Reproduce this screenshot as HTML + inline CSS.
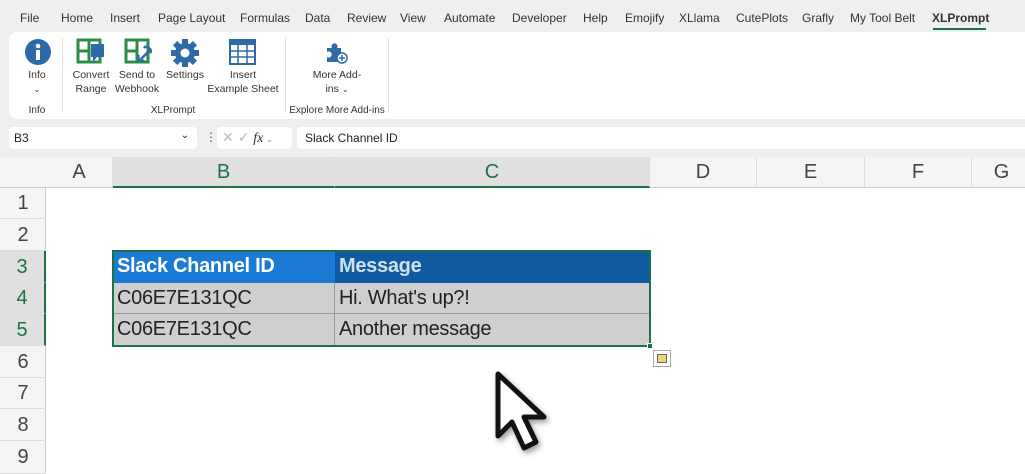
<!DOCTYPE html><html><head><style>
*{margin:0;padding:0;box-sizing:border-box}
body{width:1025px;height:474px;overflow:hidden;background:#eeeff1;font-family:"Liberation Sans",sans-serif;position:relative;color:#222}
.a{position:absolute}
.tab{position:absolute;top:11px;font-size:12px;color:#333}
.lbl{position:absolute;font-size:10.5px;text-align:center;line-height:14px;color:#333;white-space:nowrap}
.ch{position:absolute;top:157px;height:30px;font-size:20px;color:#444;text-align:center;line-height:30px;border-right:1px solid #ddd}
.rh{position:absolute;left:0;width:46px;font-size:20px;color:#444;text-align:center;border-bottom:1px solid #ddd}
.cell{position:absolute;font-size:20px;line-height:31px;padding-left:4px;letter-spacing:-0.3px}
</style></head><body>
<div class="tab" style="left:20px">File</div>
<div class="tab" style="left:61px">Home</div>
<div class="tab" style="left:110px">Insert</div>
<div class="tab" style="left:158px">Page Layout</div>
<div class="tab" style="left:240px">Formulas</div>
<div class="tab" style="left:305px">Data</div>
<div class="tab" style="left:347px">Review</div>
<div class="tab" style="left:400px">View</div>
<div class="tab" style="left:444px">Automate</div>
<div class="tab" style="left:512px">Developer</div>
<div class="tab" style="left:583px">Help</div>
<div class="tab" style="left:625px">Emojify</div>
<div class="tab" style="left:679px">XLlama</div>
<div class="tab" style="left:736px">CutePlots</div>
<div class="tab" style="left:802px">Grafly</div>
<div class="tab" style="left:850px">My Tool Belt</div>
<div class="tab" style="left:932px;font-weight:bold">XLPrompt</div>
<div class="a" style="left:933px;top:28px;width:53px;height:2px;background:#1e7145"></div>

<div class="a" style="left:9px;top:32px;width:1016px;height:87px;background:#fff;border-radius:8px 0 0 8px"></div>
<div class="a" style="left:62px;top:38px;width:1px;height:74px;background:#e0e0e0"></div>
<div class="a" style="left:285px;top:38px;width:1px;height:74px;background:#e0e0e0"></div>
<div class="a" style="left:388px;top:38px;width:1px;height:74px;background:#e0e0e0"></div>
<svg class="a" style="left:24px;top:38px" width="28" height="28"><circle cx="14" cy="14" r="13" fill="#2e6aa8"/><rect x="12" y="12" width="4" height="10" fill="#fff"/><circle cx="14" cy="8" r="2.3" fill="#fff"/></svg>
<svg class="a" style="left:76px;top:38px" width="30" height="28"><rect x="2" y="2" width="22" height="22" fill="none" stroke="#2e8b4a" stroke-width="3"/><path d="M13 2v22M2 13h11" stroke="#2e8b4a" stroke-width="3"/><rect x="15" y="6" width="13" height="13" fill="#2e6aa8"/><path d="M17 19v5l4-5z" fill="#2e6aa8"/></svg>
<svg class="a" style="left:124px;top:38px" width="30" height="28"><rect x="2" y="2" width="22" height="22" fill="none" stroke="#2e8b4a" stroke-width="3"/><path d="M13 2v22M2 13h11" stroke="#2e8b4a" stroke-width="3"/><path d="M17 21l9-9M20 10a3 3 0 0 1 5 0l1 1a3 3 0 0 1 0 4M15 17a3 3 0 0 0 0 4l1 1a3 3 0 0 0 4 0" stroke="#2e6aa8" stroke-width="2.5" fill="none"/></svg>
<svg class="a" style="left:170px;top:38px" width="30" height="30" viewBox="0 0 30 30"><g fill="#2e6aa8" transform="translate(15 15)"><circle r="10"/><rect x="-3" y="-14" width="6" height="28"/><rect x="-3" y="-14" width="6" height="28" transform="rotate(45)"/><rect x="-3" y="-14" width="6" height="28" transform="rotate(90)"/><rect x="-3" y="-14" width="6" height="28" transform="rotate(135)"/></g><circle cx="15" cy="15" r="4.5" fill="#fff"/></svg>
<svg class="a" style="left:229px;top:39px" width="27" height="26"><rect x="1" y="1" width="25" height="24" fill="#fff" stroke="#2e6aa8" stroke-width="2"/><rect x="1" y="1" width="25" height="5" fill="#2e6aa8"/><path d="M1 12h25M1 18h25M9 6v19M18 6v19" stroke="#2e6aa8" stroke-width="1.5"/></svg>
<svg class="a" style="left:324px;top:40px" width="24" height="24"><path d="M3 8h5a3 3 0 1 1 5 0h4v5a3 3 0 1 1 0 5v4H3v-5a3 3 0 1 0 0-5z" fill="#2e6aa8"/><circle cx="18" cy="18" r="5" fill="#fff" stroke="#2e6aa8" stroke-width="1.5"/><path d="M18 15v6M15 18h6" stroke="#2e6aa8" stroke-width="1.5"/></svg>
<div class="lbl" style="left:17px;top:68px;width:40px">Info<br><span style="font-size:8px">⌄</span></div>
<div class="lbl" style="left:68px;top:68px;width:46px">Convert<br>Range</div>
<div class="lbl" style="left:112px;top:68px;width:50px">Send to<br>Webhook</div>
<div class="lbl" style="left:162px;top:68px;width:46px">Settings</div>
<div class="lbl" style="left:204px;top:68px;width:78px">Insert<br>Example Sheet</div>
<div class="lbl" style="left:300px;top:68px;width:74px">More Add-<br>ins <span style="font-size:8px">⌄</span></div>
<div class="lbl" style="left:17px;top:104px;width:40px;font-size:10px">Info</div>
<div class="lbl" style="left:140px;top:104px;width:66px;font-size:10px">XLPrompt</div>
<div class="lbl" style="left:285px;top:104px;width:104px;font-size:10px">Explore More Add-ins</div>

<div class="a" style="left:9px;top:127px;width:188px;height:22px;background:#fff;border-radius:4px;font-size:12px;padding:4px 5px">B3<span style="position:absolute;right:8px;top:3px;font-size:10px">⌄</span></div>
<div class="a" style="left:205px;top:130px;font-size:12px;color:#555">⋮</div>
<div class="a" style="left:217px;top:127px;width:75px;height:22px;background:#fff;border-radius:4px;font-size:14px;color:#bbb;padding:2px 5px">✕ ✓ <i style="font-family:'Liberation Serif';color:#333">fx</i><span style="font-size:9px;color:#888"> ⌄</span></div>
<div class="a" style="left:297px;top:127px;width:728px;height:22px;background:#fff;border-radius:4px 0 0 4px;font-size:12px;padding:4px 8px">Slack Channel ID</div>

<div class="a" style="left:46px;top:188px;width:979px;height:286px;background:#fff"></div>
<div class="a" style="left:0;top:157px;width:1025px;height:31px;background:#f5f5f5;border-bottom:1px solid #ccc"></div>
<div class="ch" style="left:46px;width:67px">A</div>
<div class="ch" style="left:113px;width:222px;background:#e0e0e0;color:#1e7145;border-bottom:2px solid #1e7145;height:31px">B</div>
<div class="ch" style="left:335px;width:315px;background:#e0e0e0;color:#1e7145;border-bottom:2px solid #1e7145;height:31px">C</div>
<div class="ch" style="left:650px;width:107px">D</div>
<div class="ch" style="left:757px;width:108px">E</div>
<div class="ch" style="left:865px;width:107px">F</div>
<div class="ch" style="left:972px;width:60px">G</div>
<div class="a" style="left:0;top:188px;width:46px;height:286px;background:#f5f5f5;border-right:1px solid #ccc"></div>
<div class="rh" style="top:188px;height:31px;line-height:31px">1</div>
<div class="rh" style="top:219px;height:32px;line-height:32px">2</div>
<div class="rh" style="top:251px;height:32px;line-height:32px;background:#e0e0e0;color:#1e7145;border-right:2px solid #1e7145">3</div>
<div class="rh" style="top:283px;height:31px;line-height:31px;background:#e0e0e0;color:#1e7145;border-right:2px solid #1e7145">4</div>
<div class="rh" style="top:314px;height:32px;line-height:32px;background:#e0e0e0;color:#1e7145;border-right:2px solid #1e7145">5</div>
<div class="rh" style="top:346px;height:32px;line-height:32px">6</div>
<div class="rh" style="top:378px;height:31px;line-height:31px">7</div>
<div class="rh" style="top:409px;height:32px;line-height:32px">8</div>
<div class="rh" style="top:441px;height:33px;line-height:32px">9</div>

<div class="cell" style="left:113px;top:251px;width:222px;height:32px;background:#1a7ad4;color:#fff;font-weight:bold">Slack Channel ID</div>
<div class="cell" style="left:335px;top:251px;width:315px;height:32px;background:#0f5aa0;color:#cfe0f0;font-weight:bold">Message</div>
<div class="cell" style="left:113px;top:283px;width:222px;height:31px;background:#cfcfcf;border-right:1px solid #999;border-bottom:1px solid #999">C06E7E131QC</div>
<div class="cell" style="left:335px;top:283px;width:315px;height:31px;background:#cfcfcf;border-bottom:1px solid #999">Hi. What's up?!</div>
<div class="cell" style="left:113px;top:314px;width:222px;height:32px;background:#cfcfcf;border-right:1px solid #999">C06E7E131QC</div>
<div class="cell" style="left:335px;top:314px;width:315px;height:32px;background:#cfcfcf">Another message</div>
<div class="a" style="left:112px;top:250px;width:539px;height:97px;border:2px solid #1e7145"></div>
<div class="a" style="left:647px;top:343px;width:6px;height:6px;background:#1e7145;border:1px solid #fff"></div>
<div class="a" style="left:653px;top:350px;width:18px;height:17px;border:1px solid #aaa;background:#fff"><div style="margin:3px;width:10px;height:9px;border:1px solid #666;background:#f2d27a"></div></div>
<svg class="a" style="left:490px;top:370px" width="62" height="90"><path d="M8 4v62l14-14 12 26 12-6-12-25h20z" fill="#fff" stroke="#111" stroke-width="5" stroke-linejoin="round" filter="drop-shadow(2px 3px 3px rgba(0,0,0,.4))"/></svg>
</body></html>
